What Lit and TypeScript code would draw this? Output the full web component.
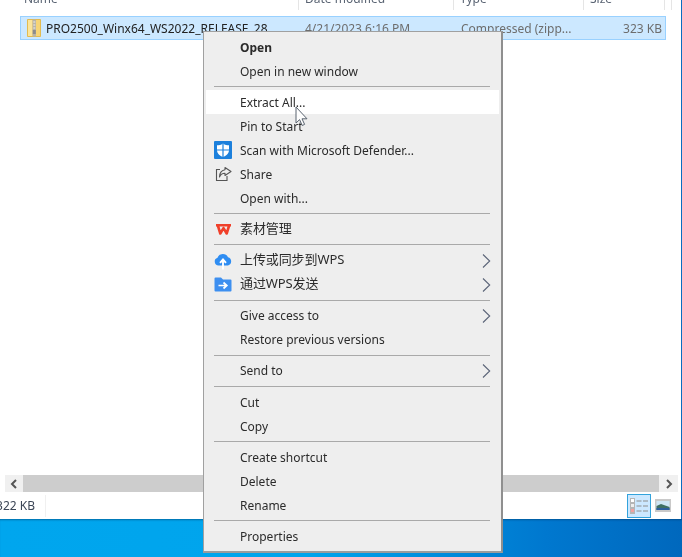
import { LitElement, html, css, svg } from "lit";
import { customElement } from "lit/decorators.js";

const chevron = html`<svg class="chev" width="9" height="14" viewBox="0 0 9 14"><path d="M1 .5 L7.7 7 L1 13.5" fill="none" stroke="#5b6478" stroke-width="1.1"/></svg>`;

const shield = html`<svg width="18" height="18" viewBox="0 0 18 18"><rect width="18" height="18" rx="1" fill="#1c80dc"/><path d="M9 2.5 C11 4 13 4.3 15 4.3 V9 C15 12.5 12 15 9 16 C6 15 3 12.5 3 9 V4.3 C5 4.3 7 4 9 2.5Z" fill="#fff"/><path d="M9 2.5v13.5M3 9h12" stroke="#1c80dc" stroke-width="1.2"/></svg>`;
const share = html`<svg width="17" height="16" viewBox="0 0 17 16"><path d="M5 3.5H1.5V14.5H12V10" fill="none" stroke="#555" stroke-width="1.1"/><path d="M10 1.5L16 5.5L10 9.5V7.3C7.5 7.3 5.5 8.5 4.5 11C4.5 7.5 6.5 4.5 10 3.8Z" fill="none" stroke="#555" stroke-width="1.1" stroke-linejoin="round"/></svg>`;
const wps = html`<svg width="17" height="13" viewBox="0 0 17 13"><path d="M1 2.2H16M2.7 2L5.3 10.5L8.5 5.2L11.7 10.5L14.3 2" fill="none" stroke="#f0402a" stroke-width="2.6" stroke-linejoin="round"/></svg>`;
const cloud = html`<svg width="18" height="18" viewBox="0 0 18 18"><path d="M4.5 13.5A4 4 0 0 1 3.5 5.7 A5.7 5.7 0 0 1 14 5.2 A4.3 4.3 0 0 1 14 13.5Z" fill="#2f8df2"/><path d="M9 17.5V8M6 10.8L9 7.5L12 10.8" fill="none" stroke="#fff" stroke-width="1.9"/></svg>`;
const folder = html`<svg width="18" height="15" viewBox="0 0 18 15"><path d="M0.5 1.5A1 1 0 0 1 1.5 .5H7L9 2.5H16.5A1 1 0 0 1 17.5 3.5V13.5A1 1 0 0 1 16.5 14.5H1.5A1 1 0 0 1 .5 13.5Z" fill="#3d8ff0"/><path d="M4.5 8.5H12.5M9.5 5.5L12.8 8.5L9.5 11.5" fill="none" stroke="#fff" stroke-width="1.7"/></svg>`;

type Item = { t: string; bold?: boolean; hover?: boolean; icon?: unknown; sub?: boolean; cjk?: boolean } | null;
const items: Item[] = [
  { t: "Open", bold: true },
  { t: "Open in new window" },
  null,
  { t: "Extract All...", hover: true },
  { t: "Pin to Start" },
  { t: "Scan with Microsoft Defender...", icon: shield },
  { t: "Share", icon: share },
  { t: "Open with..." },
  null,
  { t: "素材管理", icon: wps, cjk: true },
  null,
  { t: "上传或同步到WPS", icon: cloud, sub: true, cjk: true },
  { t: "通过WPS发送", icon: folder, sub: true, cjk: true },
  null,
  { t: "Give access to", sub: true },
  { t: "Restore previous versions" },
  null,
  { t: "Send to", sub: true },
  null,
  { t: "Cut" },
  { t: "Copy" },
  null,
  { t: "Create shortcut" },
  { t: "Delete" },
  { t: "Rename" },
  null,
  { t: "Properties" },
];

const zipIcon = svg`<path d="M.5 .5H13.5V17.5H.5Z" fill="#f7d576" stroke="#e3bb50" stroke-width="1"/><path d="M1 1H5V17H1Z" fill="#fbe59a"/><rect x="5.5" y=".5" width="3.5" height="17" fill="#b9b4a6"/><path d="M6.3 3h2M6.3 6h2M6.3 9h2" stroke="#eee" stroke-width="1"/><rect x="5.8" y="11" width="3" height="4" fill="#8c8c8c"/>`;

@customElement("app-root")
export class AppRoot extends LitElement {
  static styles = css`
    :host {
      display: block;
      position: relative;
      width: 682px;
      height: 557px;
      overflow: hidden;
      font-family: "Noto Sans", "Noto Sans CJK SC", sans-serif;
      font-size: 12px;
      color: #2b2b2b;
      background: #0a6cc0;
      filter: blur(0.3px);
    }
    .page { display: flex; flex-direction: column; height: 100%; }
    .win { flex: 1; display: flex; flex-direction: column; background: #fff; min-height: 0; margin-right: 1px; }
    .head { height: 10px; display: flex; overflow: hidden; align-items: flex-end; color: #5a6473; }
    .col { height: 10px; border-right: 1px solid #e5e5e5; padding-left: 6px; box-sizing: border-box; line-height: 6px; white-space: nowrap; }
    .col span { display: block; transform: translateY(-4px); }
    .c1 { width: 299px; padding-left: 24px; }
    .c2 { width: 155px; }
    .c3 { width: 130px; }
    .c4 { width: 81px; }
    .c5 { width: 6px; }
    .list { flex: 1; padding: 6px 15px 0 20px; min-height: 0; }
    .sel {
      height: 24px;
      box-sizing: border-box;
      background: #cce8ff;
      border: 1px solid #99d1ff;
      display: flex;
      align-items: center;
      white-space: nowrap;
    }
    .zip { margin-left: 6px; margin-right: 5px; flex: none; }
    .name { width: 259px; color: #222; flex: none; }
    .date { width: 156px; color: #6d6d6d; flex: none; }
    .type { width: 130px; color: #6d6d6d; flex: none; }
    .size { flex: 1; text-align: right; color: #6d6d6d; padding-right: 3px; }
    .hbar { height: 17px; margin: 0 3px 0 5px; display: flex; background: #f0f0f0; }
    .arrow { width: 18px; display: flex; align-items: center; justify-content: center; flex: none; }
    .arrow.r { width: 19px; }
    .thumb { flex: 1; background: #cdcdcd; }
    .status { height: 27px; display: flex; align-items: center; box-sizing: border-box; }
    .count { width: 46px; box-sizing: border-box; display: flex; justify-content: flex-end; padding-right: 10px; border-right: 1px solid #f0f0f0; color: #3c4656; white-space: nowrap; height: 22px; line-height: 22px; flex: none; overflow: hidden; }
    .views { margin-left: auto; display: flex; align-items: center; gap: 4px; margin-right: 10px; }
    .vbtn { width: 24px; height: 24px; box-sizing: border-box; background: #cce8ff; border: 1px solid #33a3dc; display: flex; align-items: center; justify-content: center; }
    .desk {
      height: 38px;
      flex: none;
      background: linear-gradient(90deg, #00a6ee 0%, #00a4ec 45%, #0078cf 80%, #0068bd 100%);
      box-shadow: inset 0 2px 2px -1px rgba(0, 60, 110, .55);
    }
    .menu {
      position: absolute;
      left: 203px;
      top: 31px;
      width: 300px;
      height: 522px;
      box-sizing: border-box;
      background: #eeeeee;
      border: 1px solid #a0a0a0;
      border-right: 2px solid #8f8f8f;
      border-bottom: 2px solid #9c9c9c;
      padding: 3px 2px;
      color: #2b2b2b;
    }
    .row { height: 24px; display: flex; align-items: center; position: relative; }
    .row.hover { background: #fff; }
    .row.bold { font-weight: 700; }
    .ic { width: 34px; flex: none; display: flex; align-items: center; justify-content: center; box-sizing: border-box; }
    .lbl { white-space: nowrap; }
    .lbl.cjk { font-size: 13px; letter-spacing: -0.1px; line-height: 15px; padding-bottom: 2px; }
    .chev { position: absolute; right: 8px; top: 5px; }
    .sep { height: 7.2px; display: flex; align-items: center; padding: 0 9px 0 8px; box-sizing: border-box; }
    .sep i { display: block; height: 1px; width: 100%; background: #a9a9a9; }
    .cursor { position: absolute; left: 295px; top: 106px; }
  `;

  render() {
    return html`
      <div class="page">
        <div class="win">
          <div class="head">
            <div class="col c1"><span>Name</span></div>
            <div class="col c2"><span>Date modified</span></div>
            <div class="col c3"><span>Type</span></div>
            <div class="col c4"><span>Size</span></div>
            <div class="col c5"></div>
          </div>
          <div class="list">
            <div class="sel">
              <svg class="zip" width="14" height="18" viewBox="0 0 14 18">${zipIcon}</svg>
              <div class="name">PRO2500_Winx64_WS2022_RELEASE_28</div>
              <div class="date">4/21/2023 6:16 PM</div>
              <div class="type">Compressed (zipp...</div>
              <div class="size">323 KB</div>
            </div>
          </div>
          <div class="hbar">
            <div class="arrow"><svg width="8" height="10" viewBox="0 0 8 10"><path d="M6 1L2 5L6 9" fill="none" stroke="#555" stroke-width="2"/></svg></div>
            <div class="thumb"></div>
            <div class="arrow r"><svg width="8" height="10" viewBox="0 0 8 10"><path d="M2 1L6 5L2 9" fill="none" stroke="#555" stroke-width="2"/></svg></div>
          </div>
          <div class="status">
            <div class="count">322 KB</div>
            <div class="views">
              <div class="vbtn">
                <svg width="18" height="16" viewBox="0 0 18 16"><rect x="0" y="0" width="5" height="16" fill="#b5b5b5"/><rect x="1" y="1" width="3" height="3" fill="#fff"/><rect x="1" y="6" width="3" height="3" fill="#eee"/><rect x="1" y="11" width="3" height="3" fill="#f2a0a0"/><path d="M6.5 3h5M13 3h5M6.5 8h5M13 8h5M6.5 13h5M13 13h5" stroke="#8d8d8d" stroke-width="1.2"/></svg>
              </div>
              <svg width="16" height="13" viewBox="0 0 16 13"><rect width="16" height="13" fill="#c9c9c9"/><rect x="1.5" y="2" width="13" height="9" fill="#cfe6f5"/><path d="M1.5 7 L6 5 L14.5 8 V11 H1.5Z" fill="#3f6f63"/><rect x="1.5" y="9" width="13" height="2" fill="#2f5f9e"/></svg>
            </div>
          </div>
        </div>
        <div class="desk"></div>
      </div>
      <div class="menu">
        ${items.map((it) =>
          it === null
            ? html`<div class="sep"><i></i></div>`
            : html`<div class="row ${it.hover ? "hover" : ""} ${it.bold ? "bold" : ""}">
                <div class="ic">${it.icon ?? ""}</div>
                <div class="lbl ${it.cjk ? "cjk" : ""}">${it.t}</div>
                ${it.sub ? chevron : ""}
              </div>`
        )}
      </div>
      <svg class="cursor" width="14" height="22" viewBox="0 0 14 22"><path d="M1 1V17L4.6 13.6L7.2 19.5L9.6 18.4L7 12.8H12Z" fill="#fff" fill-opacity=".85" stroke="#5a6470" stroke-width="1"/></svg>
    `;
  }
}
